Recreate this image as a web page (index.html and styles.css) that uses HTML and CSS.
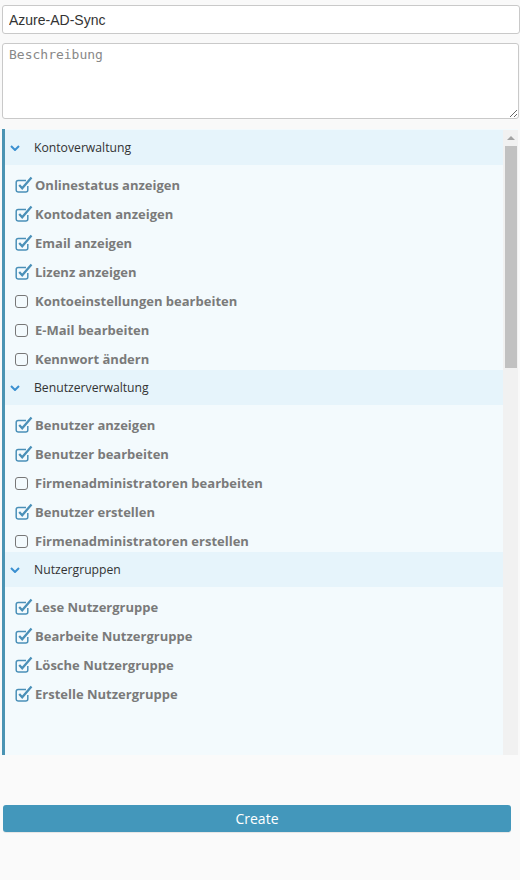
FILE: index.html
```html
<!DOCTYPE html>
<html lang="de">
<head>
<meta charset="utf-8">
<title>Azure-AD-Sync</title>
<link rel="stylesheet" href="styles.css">
</head>
<body>
<div class="form">
  <input class="name-input" type="text" value="Azure-AD-Sync">
  <textarea class="desc" placeholder="Beschreibung"></textarea>

  <div class="panel">
    <div class="sections">
      <div class="section">
        <div class="sec-head"><svg class="chev" viewBox="0 0 10 6" width="10" height="6"><path d="M1 1 L5 5 L9 1" fill="none" stroke="#3a8fd0" stroke-width="2"/></svg><span>Kontoverwaltung</span></div>
        <ul class="items">
          <li class="item on"><span class="cb"></span>Onlinestatus anzeigen</li>
          <li class="item on"><span class="cb"></span>Kontodaten anzeigen</li>
          <li class="item on"><span class="cb"></span>Email anzeigen</li>
          <li class="item on"><span class="cb"></span>Lizenz anzeigen</li>
          <li class="item"><span class="cb"></span>Kontoeinstellungen bearbeiten</li>
          <li class="item"><span class="cb"></span>E-Mail bearbeiten</li>
          <li class="item"><span class="cb"></span>Kennwort ändern</li>
        </ul>
      </div>
      <div class="section">
        <div class="sec-head"><svg class="chev" viewBox="0 0 10 6" width="10" height="6"><path d="M1 1 L5 5 L9 1" fill="none" stroke="#3a8fd0" stroke-width="2"/></svg><span>Benutzerverwaltung</span></div>
        <ul class="items">
          <li class="item on"><span class="cb"></span>Benutzer anzeigen</li>
          <li class="item on"><span class="cb"></span>Benutzer bearbeiten</li>
          <li class="item"><span class="cb"></span>Firmenadministratoren bearbeiten</li>
          <li class="item on"><span class="cb"></span>Benutzer erstellen</li>
          <li class="item"><span class="cb"></span>Firmenadministratoren erstellen</li>
        </ul>
      </div>
      <div class="section">
        <div class="sec-head"><svg class="chev" viewBox="0 0 10 6" width="10" height="6"><path d="M1 1 L5 5 L9 1" fill="none" stroke="#3a8fd0" stroke-width="2"/></svg><span>Nutzergruppen</span></div>
        <ul class="items">
          <li class="item on"><span class="cb"></span>Lese Nutzergruppe</li>
          <li class="item on"><span class="cb"></span>Bearbeite Nutzergruppe</li>
          <li class="item on"><span class="cb"></span>Lösche Nutzergruppe</li>
          <li class="item on"><span class="cb"></span>Erstelle Nutzergruppe</li>
        </ul>
      </div>
    </div>
    <div class="vscroll" aria-hidden="true">
      <div class="vs-up"><span class="vs-arrow"></span></div>
      <div class="vs-thumb"></div>
    </div>
  </div>

  <div class="footer">
    <button class="create" type="button">Create</button>
  </div>
</div>
</body>
</html>
```

FILE: styles.css
```css
html, body {
  margin: 0;
  padding: 0;
  background: #f9f9f9;
}

.form {
  display: flex;
  flex-direction: column;
  padding: 5px 0 0 2px;
  height: 875px;
  overflow: hidden;
}

.name-input {
  box-sizing: border-box;
  width: 518px;
  height: 29px;
  margin: 0;
  padding: 0 6px;
  border: 1px solid #c9c9c9;
  border-radius: 3px;
  background: #fff;
  font-family: "Liberation Sans", Arial, sans-serif;
  font-size: 14px;
  color: #333;
  outline: none;
}

.desc {
  box-sizing: border-box;
  width: 517px;
  height: 76px;
  margin: 9px 0 0 0;
  padding: 3px 6px;
  border: 1px solid #c9c9c9;
  border-radius: 3px;
  background: #fff;
  font-family: "DejaVu Sans Mono", monospace;
  font-size: 13px;
  color: #333;
  resize: vertical;
  outline: none;
}

.desc::placeholder {
  color: #888;
}

.panel {
  box-sizing: border-box;
  display: flex;
  width: 516px;
  height: 626px;
  margin-top: 10px;
  padding-top: 1px;
  border-left: 3px solid #4a93b3;
  background: #f3fafd;
  flex: none;
  overflow: hidden;
}

.sections {
  flex: 1;
  min-width: 0;
  overflow: hidden;
}

.vscroll {
  width: 15px;
  flex: none;
  display: flex;
  flex-direction: column;
  background: #f1f1f1;
}

.vs-up {
  height: 16px;
  display: flex;
  justify-content: center;
  align-items: center;
}

.vs-arrow {
  width: 0;
  height: 0;
  margin: 0 0 1px 1px;
  border-left: 4px solid transparent;
  border-right: 4px solid transparent;
  border-bottom: 4px solid #a3a3a3;
}

.vs-thumb {
  height: 222px;
  margin: 0 1px 0 2px;
  background: #c1c1c1;
}

.sec-head {
  display: flex;
  align-items: center;
  height: 35px;
  background: #e6f4fb;
  font-family: "Open Sans", "Noto Sans", sans-serif;
  font-size: 12.2px;
  color: #333;
}

.chev {
  width: 10px;
  height: 6px;
  margin: 1px 0 0 5px;
  flex: none;
}

.sec-head span {
  margin-left: 14px;
}

.items {
  list-style: none;
  margin: 0;
  padding: 0 0 2px 0;
}

.item {
  display: flex;
  align-items: center;
  height: 19px;
  margin-top: 10px;
  padding-left: 10px;
  font-family: "Open Sans", "Noto Sans", sans-serif;
  font-weight: 700;
  font-size: 13px;
  color: #7a7a7a;
  white-space: nowrap;
}

.cb {
  box-sizing: border-box;
  width: 13px;
  height: 13px;
  margin-right: 7px;
  border: 1.2px solid #777;
  border-radius: 3px;
  flex: none;
  position: relative;
  top: 1px;
}

.item.on .cb {
  border: none;
  width: 18px;
  height: 18px;
  margin-right: 2px;
  top: -1px;
  background: url("data:image/svg+xml,%3Csvg xmlns='http://www.w3.org/2000/svg' viewBox='0 0 18 18' width='18' height='18'%3E%3Cpath d='M11 5.5 H3.2 Q1.2 5.5 1.2 7.5 V15 Q1.2 17 3.2 17 H10.8 Q12.8 17 12.8 15 V11' fill='none' stroke='%234a90b8' stroke-width='1.5'/%3E%3Cpath d='M4.2 10 L7.2 13.2 L16.5 2.5' fill='none' stroke='%234a90b8' stroke-width='2.3'/%3E%3C/svg%3E") no-repeat;
}

.footer {
  flex: 1;
  background: #fafafa;
  margin-left: -2px;
  padding: 50px 0 0 3px;
}

.create {
  display: block;
  width: 508px;
  height: 27px;
  border: none;
  border-radius: 3px;
  background: #4397bb;
  color: #fff;
  font-family: "Open Sans", "Noto Sans", sans-serif;
  font-size: 14px;
  cursor: pointer;
  box-shadow: 0 1px 0 #e6e6e6;
}
```
